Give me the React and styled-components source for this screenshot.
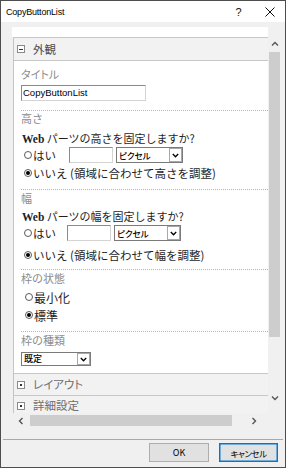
import React from "react";
import styled, { createGlobalStyle } from "styled-components";

const JP = `"Noto Sans CJK JP", "Noto Sans", sans-serif`;
const UI = `"Liberation Sans", Arial, "Noto Sans CJK JP", sans-serif`;

const Global = createGlobalStyle`
  html, body { margin: 0; padding: 0; background: #fff; }
  * { box-sizing: border-box; }
`;

const Window = styled.div`
  width: 286px;
  height: 468px;
  border: 1px solid #4d4d4d;
  display: flex;
  flex-direction: column;
  background: #f0f0f0;
  overflow: hidden;
`;

const TitleBar = styled.div`
  height: 21px;
  flex: none;
  background: #fff;
  display: flex;
  align-items: center;
  padding-left: 5px;
  font-family: ${UI};
  font-size: 9px;
  color: #000;
`;

const Title = styled.span`
  flex: 1;
  letter-spacing: -0.2px;
`;

const TitleBtn = styled.span`
  width: 31px;
  height: 21px;
  display: flex;
  align-items: center;
  justify-content: center;
  font-family: ${UI};
  font-size: 11px;
  color: #111;
`;

const Body = styled.div`
  flex: 1;
  display: flex;
  flex-direction: column;
`;

const Main = styled.div`
  margin-top: 5px;
  height: 386px;
  display: flex;
  padding-left: 11px;
  padding-right: 4px;
`;

const Viewport = styled.div`
  width: 256px;
  display: flex;
  flex-direction: column;
  overflow: hidden;
`;

const TopStrip = styled.div`
  height: 10px;
  flex: none;
  background: #fff;
`;

const Box = styled.div`
  flex: 1;
  min-height: 0;
  margin-left: 1px;
  border-left: 1px solid #c4c4c4;
  display: flex;
  flex-direction: column;
  overflow: hidden;
`;

const GroupHeader = styled.div`
  height: ${(p) => p.$h}px;
  flex: none;
  border-top: 1px solid #c8c8c8;
  border-bottom: ${(p) => (p.$open ? "1px solid #c8c8c8" : "none")};
  background: #f2f2f2;
  display: flex;
  align-items: center;
  padding-left: 3px;
  font-family: ${JP};
  font-size: 11.5px;
  line-height: 13px;
  color: ${(p) => (p.$open ? "#4a4a4a" : "#6e6e6e")};
  font-feature-settings: "palt";
`;

const Toggle = styled.span`
  width: 8px;
  height: 8px;
  border: 1px solid #8a8a8a;
  background: #fff;
  margin-right: 8px;
  position: relative;
  flex: none;
  &::after {
    content: "";
    position: absolute;
    left: ${(p) => (p.$open ? "1px" : "2px")};
    top: ${(p) => (p.$open ? "2.5px" : "2px")};
    width: ${(p) => (p.$open ? "4px" : "2px")};
    height: ${(p) => (p.$open ? "1px" : "2px")};
    background: #333;
  }
`;

const Content = styled.div`
  background: #fff;
  padding: 6px 0 7px 7px;
  display: flex;
  flex-direction: column;
  flex: none;
`;

const Label = styled.div`
  margin-top: ${(p) => p.$mt || 0}px;
  line-height: 14px;
  height: 14px;
  font-family: ${JP};
  font-size: 11px;
  color: #8c8c8c;
  font-feature-settings: ${(p) => (p.$palt ? '"palt"' : "normal")};
`;

const TextBox = styled.div`
  margin-top: ${(p) => p.$mt || 0}px;
  margin-left: ${(p) => p.$ml || 0}px;
  width: ${(p) => p.$w}px;
  height: 16px;
  flex: none;
  border: 1px solid;
  border-color: #8a8a8a #d4d4d4 #d4d4d4 #8a8a8a;
  background: #fff;
  font-family: ${UI};
  font-size: 9.5px;
  line-height: 14px;
  padding-left: 1px;
  color: #000;
`;

const Sep = styled.div`
  margin-top: ${(p) => p.$mt || 0}px;
  border-top: 1px dotted #a3b8d8;
  height: 1px;
`;

const Question = styled.div`
  margin-top: ${(p) => p.$mt || 0}px;
  margin-left: 1px;
  height: 16px;
  line-height: 16px;
  font-family: ${JP};
  font-size: 11px;
  color: #1e1e1e;
  white-space: nowrap;
`;

const Web = styled.span`
  font-family: "Liberation Serif", serif;
  font-weight: bold;
  font-size: 11.5px;
`;

const RadioRow = styled.div`
  margin-top: ${(p) => p.$mt || 0}px;
  height: 16px;
  display: flex;
  align-items: center;
  padding-left: ${(p) => (p.$big ? 4 : 3)}px;
  font-family: ${JP};
  font-size: ${(p) => (p.$big ? 12 : 11.5)}px;
  color: #1e1e1e;
  white-space: nowrap;
`;

const Radio = styled.span`
  width: 8px;
  height: 8px;
  border-radius: 50%;
  border: 1px solid #5c5c5c;
  margin-right: 1px;
  flex: none;
  display: flex;
  align-items: center;
  justify-content: center;
  &::after {
    content: "";
    width: 4px;
    height: 4px;
    border-radius: 50%;
    background: ${(p) => (p.$checked ? "#000" : "transparent")};
  }
`;

const Select = styled.div`
  margin-top: ${(p) => p.$mt || 0}px;
  margin-left: ${(p) => p.$ml || 0}px;
  width: ${(p) => p.$w}px;
  height: ${(p) => p.$h}px;
  flex: none;
  border: 1px solid #7a7a7a;
  background: #fff;
  display: flex;
  align-items: stretch;
`;

const SelectText = styled.span`
  flex: 1;
  padding-left: 2px;
  font-family: ${JP};
  font-size: ${(p) => p.$fs}px;
  font-weight: 500;
  line-height: ${(p) => p.$h - 2}px;
  color: #000;
  font-feature-settings: "palt";
  white-space: nowrap;
  overflow: hidden;
`;

const SelectArrow = styled.span`
  width: 13px;
  border: 1px solid #a8a8a8;
  background: #fff;
  display: flex;
  align-items: center;
  justify-content: center;
`;

const VScroll = styled.div`
  width: 13px;
  display: flex;
  flex-direction: column;
  padding-top: 8px;
  padding-bottom: 7px;
`;

const ArrowBox = styled.div`
  height: ${(p) => (p.$h ? p.$h + "px" : "auto")};
  width: ${(p) => (p.$w ? p.$w + "px" : "auto")};
  flex: none;
  display: flex;
  align-items: center;
  justify-content: center;
`;

const VTrack = styled.div`
  flex: 1;
  padding: 0 1px;
`;

const VThumb = styled.div`
  height: 285px;
  background: #cdcdcd;
`;

const HScroll = styled.div`
  height: 15px;
  flex: none;
  display: flex;
  align-items: center;
  padding-left: 11px;
`;

const HTrack = styled.div`
  width: 216px;
  display: flex;
  align-items: center;
`;

const HThumb = styled.div`
  margin-left: 1px;
  width: 202px;
  height: 11px;
  background: #cdcdcd;
`;

const FooterLine = styled.div`
  margin: 11px 2px 0;
  height: 1px;
  background: #a9a9a9;
  flex: none;
`;

const Footer = styled.div`
  margin-top: 3px;
  display: flex;
  justify-content: flex-end;
  gap: 10px;
  padding-right: 7px;
`;

const Button = styled.div`
  width: ${(p) => p.$w}px;
  height: 19px;
  background: #e1e1e1;
  border: 1px solid ${(p) => (p.$default ? "#0078d7" : "#adadad")};
  box-shadow: ${(p) => (p.$default ? "inset 0 0 0 0.5px #0078d7" : "none")};
  display: flex;
  align-items: center;
  justify-content: center;
  font-family: ${JP};
  font-size: ${(p) => p.$fs || 9}px;
  letter-spacing: ${(p) => p.$ls || 0}px;
  color: #000;
  font-feature-settings: "palt";
`;

const Chevron = ({ dir }) => {
  const pts = {
    up: "1,4.5 4,1.5 7,4.5",
    down: "1,1.5 4,4.5 7,1.5",
    left: "4.5,1 1.5,4 4.5,7",
    right: "1.5,1 4.5,4 1.5,7",
  }[dir];
  const vertical = dir === "up" || dir === "down";
  return (
    <svg width={vertical ? 8 : 6} height={vertical ? 6 : 8} viewBox={vertical ? "0 0 8 6" : "0 0 6 8"}>
      <polyline points={pts} fill="none" stroke="#555" strokeWidth="1.4" />
    </svg>
  );
};

const SmallDown = () => (
  <svg width="7" height="5" viewBox="0 0 7 5">
    <polyline points="0.8,1 3.5,3.8 6.2,1" fill="none" stroke="#000" strokeWidth="1.3" />
  </svg>
);

const DropDown = ({ w, h, fs, text, mt, ml }) => (
  <Select $w={w} $h={h} $mt={mt} $ml={ml}>
    <SelectText $fs={fs} $h={h}>{text}</SelectText>
    <SelectArrow>
      <SmallDown />
    </SelectArrow>
  </Select>
);

export default function App() {
  return (
    <>
      <Global />
      <Window>
        <TitleBar>
          <Title>CopyButtonList</Title>
          <TitleBtn>?</TitleBtn>
          <TitleBtn>
            <svg width="10" height="10" viewBox="0 0 10 10">
              <path d="M0.5 0.5 L9.5 9.5 M9.5 0.5 L0.5 9.5" stroke="#111" strokeWidth="1" />
            </svg>
          </TitleBtn>
        </TitleBar>
        <Body>
          <Main>
            <Viewport>
              <TopStrip />
              <Box>
                <GroupHeader $open $h={24}>
                  <Toggle $open />
                  外観
                </GroupHeader>
                <Content>
                  <Label $palt>タイトル</Label>
                  <TextBox $mt={4} $w={125}>CopyButtonList</TextBox>
                  <Sep $mt={9} />
                  <Label>高さ</Label>
                  <Question $mt={5}>
                    <Web>Web</Web> パーツの高さを固定しますか?
                  </Question>
                  <RadioRow $mt={1}>
                    <Radio />
                    はい
                    <TextBox $ml={13} $w={44} />
                    <DropDown w={67} h={16} fs={8.5} ml={3} text="ピクセル" />
                  </RadioRow>
                  <RadioRow $mt={2}>
                    <Radio $checked />
                    いいえ (領域に合わせて高さを調整)
                  </RadioRow>
                  <Sep $mt={8} />
                  <Label $mt={1}>幅</Label>
                  <Question $mt={3}>
                    <Web>Web</Web> パーツの幅を固定しますか?
                  </Question>
                  <RadioRow $mt={1}>
                    <Radio />
                    はい
                    <TextBox $ml={11} $w={44} />
                    <DropDown w={67} h={16} fs={8.5} ml={3} text="ピクセル" />
                  </RadioRow>
                  <RadioRow $mt={6}>
                    <Radio $checked />
                    いいえ (領域に合わせて幅を調整)
                  </RadioRow>
                  <Sep $mt={6} />
                  <Label $mt={1}>枠の状態</Label>
                  <RadioRow $mt={4} $big>
                    <Radio />
                    最小化
                  </RadioRow>
                  <RadioRow $mt={2} $big>
                    <Radio $checked />
                    標準
                  </RadioRow>
                  <Sep $mt={8} />
                  <Label $mt={1}>枠の種類</Label>
                  <DropDown w={70} h={14} fs={9} mt={5} text="既定" />
                </Content>
                <GroupHeader $h={22}>
                  <Toggle />
                  レイアウト
                </GroupHeader>
                <GroupHeader $h={20}>
                  <Toggle />
                  詳細設定
                </GroupHeader>
              </Box>
            </Viewport>
            <VScroll>
              <ArrowBox $h={17}>
                <Chevron dir="up" />
              </ArrowBox>
              <VTrack>
                <VThumb />
              </VTrack>
              <ArrowBox $h={17}>
                <Chevron dir="down" />
              </ArrowBox>
            </VScroll>
          </Main>
          <HScroll>
            <ArrowBox $w={17}>
              <Chevron dir="left" />
            </ArrowBox>
            <HTrack>
              <HThumb />
            </HTrack>
            <ArrowBox $w={17}>
              <Chevron dir="right" />
            </ArrowBox>
          </HScroll>
          <FooterLine />
          <Footer>
            <Button $w={60}>OK</Button>
            <Button $w={59} $default $fs={8.5} $ls={-0.5}>
              キャンセル
            </Button>
          </Footer>
        </Body>
      </Window>
    </>
  );
}
